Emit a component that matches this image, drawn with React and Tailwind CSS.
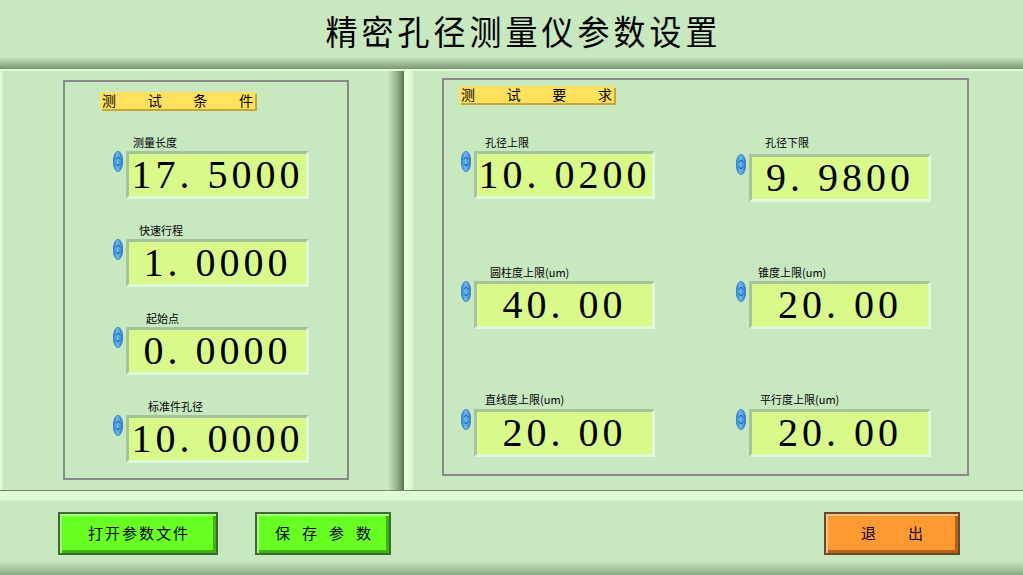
import React from "react";

const cjk = { fontFamily: '"Noto Sans CJK SC", "Noto Sans", sans-serif' };
const serif = { fontFamily: '"Liberation Serif", "DejaVu Serif", serif' };

const Spinner = () => (
    <svg width="10" height="21" viewBox="0 0 10 21" className="shrink-0">
        <defs>
            <linearGradient id="spg" x1="0" y1="0" x2="1" y2="0">
                <stop offset="0" stopColor="#2f86d8" />
                <stop offset="0.45" stopColor="#6ab8f8" />
                <stop offset="1" stopColor="#2a78c8" />
            </linearGradient>
        </defs>
        <ellipse cx="5" cy="10.5" rx="4.8" ry="10.2" fill="url(#spg)" stroke="#2468b0" strokeWidth="0.6" />
        <path d="M3 8.5 L5 6 L7 8.5" fill="none" stroke="#1d4f8a" strokeWidth="0.9" />
        <path d="M3 12.5 L5 15 L7 12.5" fill="none" stroke="#1d4f8a" strokeWidth="0.9" />
    </svg>
);

const YellowTag = ({ chars, className }) => (
    <div
        className={"flex justify-between items-center h-[17px] w-[155px] px-[2px] bg-[#ffe15e] text-[14px] leading-[17px] text-black shadow-[2px_2px_0_#c9a634] " + className}
        style={cjk}
    >
        {chars.map((c) => (
            <span key={c}>{c}</span>
        ))}
    </div>
);

const Field = ({ label, value, labelPad, boxW, boxOff = 0 }) => {
    return (
        <div className="flex flex-col">
            <div className="h-[14px] text-[11px] leading-[14px] text-black" style={{ ...cjk, paddingLeft: labelPad }}>
                {label}
            </div>
            <div className="flex items-start gap-[3px]" style={{ marginTop: 2 + boxOff }}>
                <Spinner />
                <div
                    className="h-[48px] border-[3px] border-t-[#a5c49d] border-l-[#a5c49d] border-b-[#e2f8da] border-r-[#e2f8da] bg-[#d9f98b] flex items-center justify-center"
                    style={{ width: boxW }}
                >
                    <span className="text-[40px] leading-[42px] tracking-[4px] text-black whitespace-pre" style={serif}>
                        {value}
                    </span>
                </div>
            </div>
        </div>
    );
};

const Btn = ({ chars, gap, w, color }) => {
    const green = color === "green";
    return (
        <button
            className={
                "h-[43px] flex items-center justify-center text-[15px] text-black border-2 " +
                (green
                    ? "bg-[#68ff22] border-[#3f6a34] shadow-[inset_2px_2px_0_#a6ff7c,inset_-3px_-3px_0_#3fb312]"
                    : "bg-[#ff9a32] border-[#6a4a2c] shadow-[inset_2px_2px_0_#ffc080,inset_-3px_-3px_0_#b8601a]")
            }
            style={{ ...cjk, width: w, gap }}
        >
            {chars.map((c, i) => (
                <span key={i}>{c}</span>
            ))}
        </button>
    );
};

const App = () => {
    return (
        <div className="w-[1023px] h-[575px] flex flex-col bg-[#c8e8c0] overflow-hidden">
            {/* title bar */}
            <div className="h-[69px] shrink-0 flex items-start justify-center pl-[24px] pt-[8px] bg-[linear-gradient(to_bottom,#c8e8c0_0px,#c8e8c0_57px,#a2c29a_63px,#76966e_69px)]">
                <h1 className="text-[32px] leading-[44px] font-normal tracking-[4px] text-black scale-y-[1.05]" style={cjk}>
                    精密孔径测量仪参数设置
                </h1>
            </div>

            <div className="h-[422px] shrink-0 flex border-b border-[#6f8d68]">
                {/* left panel */}
                <div className="w-[404px] shrink-0 pt-[9px] pl-[63px] border-t-2 border-t-[#e4fedd] bg-[linear-gradient(to_right,#e6ffe0_0px,#c8e8c0_4px,#c8e8c0_388px,#98b890_396px,#6a8a62_402px,#4c6a46_404px)]">
                    <div className="w-[286px] h-[400px] border-2 border-[#8a8a8a] pt-[10px] pl-[35px] flex flex-col">
                        <YellowTag chars={["测", "试", "条", "件"]} />
                        <div className="flex flex-col gap-[24px] mt-[26px] -ml-[35px] pl-[48px]">
                            <Field label="测量长度" value="17. 5000" labelPad={20} boxW={183} />
                            <Field label="快速行程" value="1. 0000" labelPad={26} boxW={183} />
                            <Field label="起始点" value="0. 0000" labelPad={33} boxW={183} />
                            <Field label="标准件孔径" value="10. 0000" labelPad={35} boxW={183} />
                        </div>
                    </div>
                </div>

                {/* right panel */}
                <div className="flex-1 pt-[7px] pl-[38px] border-t-2 border-t-[#e4fedd] bg-[linear-gradient(to_right,#e4ffdc_0px,#dcfcd4_7px,#c8e8c0_10px)]">
                    <div className="w-[527px] h-[398px] border-2 border-[#8a8a8a] pt-[6px] pl-[15px] flex flex-col">
                        <YellowTag chars={["测", "试", "要", "求"]} />
                        <div className="grid grid-cols-[275px_1fr] mt-[32px] -ml-[15px] pl-[17px] gap-y-[63px]">
                            <Field label="孔径上限" value="10. 0200" labelPad={24} boxW={181} />
                            <Field label="孔径下限" value="9. 9800" labelPad={29} boxW={182} boxOff={3} />
                            <Field label="圆柱度上限(um)" value="40. 00" labelPad={29} boxW={181} />
                            <Field label="锥度上限(um)" value="20. 00" labelPad={22} boxW={182} />
                            <Field label="直线度上限(um)" value="20. 00" labelPad={24} boxW={181} boxOff={1} />
                            <Field label="平行度上限(um)" value="20. 00" labelPad={24} boxW={182} boxOff={1} />
                        </div>
                    </div>
                </div>
            </div>

            {/* bottom bar */}
            <div className="flex-1 flex items-start pt-[21px] pl-[58px] bg-[linear-gradient(to_bottom,#e0fed8_0px,#dcfcd4_8px,#c8e8c0_11px,#c8e8c0_70px,#a8c6a0_77px,#8aa884_84px)]">
                <Btn chars={["打", "开", "参", "数", "文", "件"]} gap={2} w={160} color="green" />
                <div className="ml-[37px]">
                    <Btn chars={["保", "存", "参", "数"]} gap={12} w={136} color="green" />
                </div>
                <div className="ml-[433px]">
                    <Btn chars={["退", "出"]} gap={32} w={136} color="orange" />
                </div>
            </div>
        </div>
    );
};

export default App;
